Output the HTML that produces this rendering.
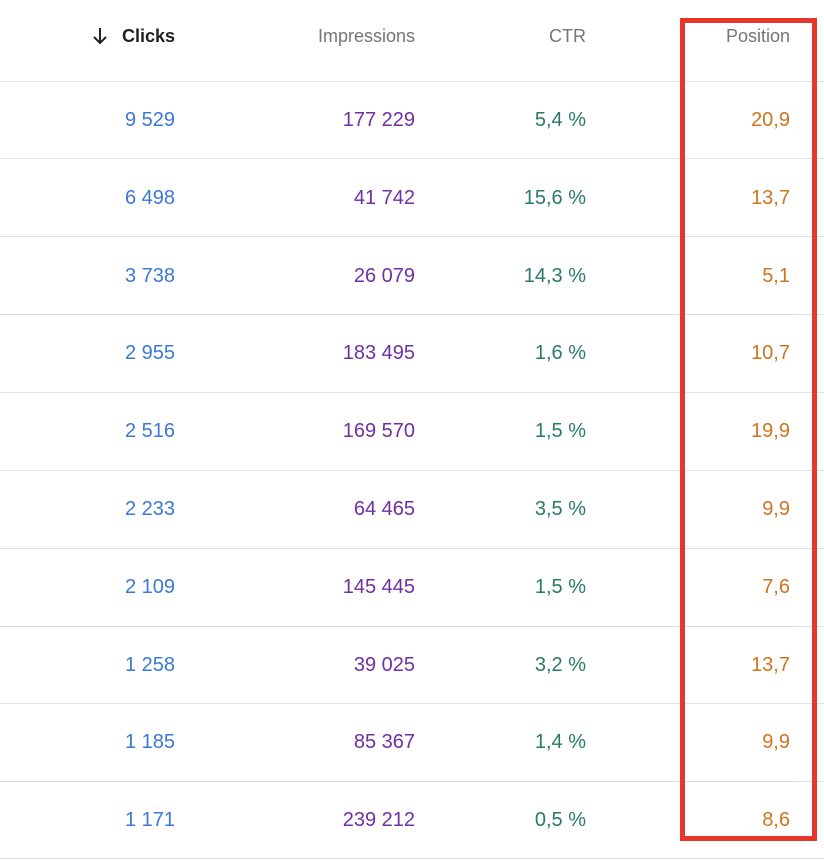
<!DOCTYPE html>
<html><head><meta charset="utf-8"><style>
html,body{margin:0;padding:0;background:#fff;}
body{width:824px;height:860px;position:relative;overflow:hidden;font-family:"Liberation Sans",Arial,sans-serif;}
.h{position:absolute;top:24px;font-size:18px;color:#757575;line-height:24px;white-space:nowrap;}
.line{position:absolute;left:0;width:824px;height:1px;background:#e0e0e0;}
.c{position:absolute;font-size:20px;line-height:24px;white-space:nowrap;text-align:right;width:150px;}
.b{color:#3c78d8;right:649px;}
.p{color:#7030a0;right:409px;}
.g{color:#2a7a6a;right:238px;}
.o{color:#d07420;right:34px;}
.box{position:absolute;left:680px;top:18px;width:127px;height:813px;border:5px solid #e8362a;}
</style></head><body>
<svg style="position:absolute;left:91px;top:26px" width="18" height="20" viewBox="0 0 18 20"><path d="M9 2V17M3 11L9 17L15 11" stroke="#202124" stroke-width="2" fill="none"/></svg>
<div class="h" style="right:649px;color:#202124;font-weight:bold;">Clicks</div>
<div class="h" style="right:409px;">Impressions</div>
<div class="h" style="right:238px;">CTR</div>
<div class="h" style="right:34px;">Position</div>
<div class="line" style="top:81px"></div>
<div class="line" style="top:158px"></div>
<div class="line" style="top:236px"></div>
<div class="line" style="top:314px"></div>
<div class="line" style="top:392px"></div>
<div class="line" style="top:470px"></div>
<div class="line" style="top:548px"></div>
<div class="line" style="top:626px"></div>
<div class="line" style="top:703px"></div>
<div class="line" style="top:781px"></div>
<div class="line" style="top:858px"></div>

<div class="c b" style="top:108px">9 529</div><div class="c p" style="top:108px">177 229</div><div class="c g" style="top:108px">5,4 %</div><div class="c o" style="top:108px">20,9</div>
<div class="c b" style="top:186px">6 498</div><div class="c p" style="top:186px">41 742</div><div class="c g" style="top:186px">15,6 %</div><div class="c o" style="top:186px">13,7</div>
<div class="c b" style="top:264px">3 738</div><div class="c p" style="top:264px">26 079</div><div class="c g" style="top:264px">14,3 %</div><div class="c o" style="top:264px">5,1</div>
<div class="c b" style="top:341px">2 955</div><div class="c p" style="top:341px">183 495</div><div class="c g" style="top:341px">1,6 %</div><div class="c o" style="top:341px">10,7</div>
<div class="c b" style="top:419px">2 516</div><div class="c p" style="top:419px">169 570</div><div class="c g" style="top:419px">1,5 %</div><div class="c o" style="top:419px">19,9</div>
<div class="c b" style="top:497px">2 233</div><div class="c p" style="top:497px">64 465</div><div class="c g" style="top:497px">3,5 %</div><div class="c o" style="top:497px">9,9</div>
<div class="c b" style="top:575px">2 109</div><div class="c p" style="top:575px">145 445</div><div class="c g" style="top:575px">1,5 %</div><div class="c o" style="top:575px">7,6</div>
<div class="c b" style="top:653px">1 258</div><div class="c p" style="top:653px">39 025</div><div class="c g" style="top:653px">3,2 %</div><div class="c o" style="top:653px">13,7</div>
<div class="c b" style="top:730px">1 185</div><div class="c p" style="top:730px">85 367</div><div class="c g" style="top:730px">1,4 %</div><div class="c o" style="top:730px">9,9</div>
<div class="c b" style="top:808px">1 171</div><div class="c p" style="top:808px">239 212</div><div class="c g" style="top:808px">0,5 %</div><div class="c o" style="top:808px">8,6</div>

<div class="box"></div>
</body></html>
